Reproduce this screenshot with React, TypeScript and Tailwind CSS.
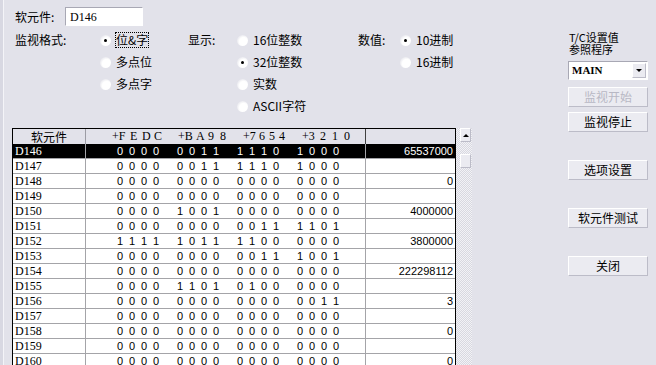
import React from "react";

const cjk = { fontFamily: '"Noto Sans CJK SC", "Noto Sans", sans-serif' };
const serif = { fontFamily: '"Liberation Serif", "Noto Sans CJK SC", serif' };
const sans = { fontFamily: '"Liberation Sans", Arial, sans-serif' };

const rows = [
	{ name: "D146", bits: "0000001111101000", value: "65537000" },
	{ name: "D147", bits: "0000001111101000", value: "" },
	{ name: "D148", bits: "0000000000000000", value: "0" },
	{ name: "D149", bits: "0000000000000000", value: "" },
	{ name: "D150", bits: "0000100100000000", value: "4000000" },
	{ name: "D151", bits: "0000000000111101", value: "" },
	{ name: "D152", bits: "1111101111000000", value: "3800000" },
	{ name: "D153", bits: "0000000000111001", value: "" },
	{ name: "D154", bits: "0000000000000000", value: "222298112" },
	{ name: "D155", bits: "0000110101000000", value: "" },
	{ name: "D156", bits: "0000000000000011", value: "3" },
	{ name: "D157", bits: "0000000000000000", value: "" },
	{ name: "D158", bits: "0000000000000000", value: "0" },
	{ name: "D159", bits: "0000000000000000", value: "" },
	{ name: "D160", bits: "0000000000000000", value: "0" },
];

const Radio = ({ checked, label, focus }: { checked?: boolean; label: string; focus?: boolean }) => (
	<div className="flex h-[22px] items-center">
		<span className="flex h-[11px] w-[11px] items-center justify-center rounded-full bg-[radial-gradient(circle_at_60%_60%,#ffffff_45%,#d6d6e0_100%)]">
			{checked && <span className="h-[3px] w-[3px] rounded-full bg-black" />}
		</span>
		<span
			className={`ml-[5px] text-[12px] leading-[14px] text-black ${focus ? "outline-1 outline-dotted outline-black" : ""}`}
			style={cjk}
		>
			{label}
		</span>
	</div>
);

const Button = ({ label, disabled }: { label: string; disabled?: boolean }) => (
	<div
		className={`flex h-[20px] w-[80px] items-center justify-center border border-t-white border-l-white border-r-[#bcbcc8] border-b-[#bcbcc8] bg-[#ebebf1] text-[12px] ${disabled ? "text-[#b8b8c4]" : "text-black"}`}
		style={cjk}
	>
		{label}
	</div>
);

const Digits = ({ bits }: { bits: string }) => (
	<div className="flex pl-[31px]" style={sans}>
		{[0, 1, 2, 3].map((g) => (
			<div key={g} className="flex w-[60px]">
				{bits
					.slice(g * 4, g * 4 + 4)
					.split("")
					.map((b, i) => (
						<span key={i} className="w-[12px] text-[11px]">
							{b}
						</span>
					))}
			</div>
		))}
	</div>
);

const headGroups = [
	{ ml: 26, pitch: 12, chars: ["+F", "E", "D", "C"] },
	{ ml: 12, pitch: 12, chars: ["+B", "A", "9", "8"] },
	{ ml: 11, pitch: 10, chars: ["+7", "6", "5", "4"] },
	{ ml: 13, pitch: 12, chars: ["+3", "2", "1", "0"] },
];

export default function App() {
	return (
		<div className="flex h-[365px] w-[656px] overflow-hidden bg-[#e2e2ea]">
			<div className="flex w-[4px] shrink-0 border-r border-[#f4f4f8] bg-[#d8d8e2]" />
			<div className="flex w-[564px] shrink-0 flex-col pl-[8px]">
				<div className="flex items-center pt-[7px]">
					<span className="ml-[3px] w-[50px] text-[12px] text-black" style={cjk}>
						软元件:
					</span>
					<div
						className="flex h-[19px] w-[78px] items-center border border-t-[#a8a8b4] border-l-[#a8a8b4] border-r-white border-b-white bg-white pl-[4px] text-[12px] text-black"
						style={serif}
					>
						D146
					</div>
				</div>

				<div className="mt-[3px] flex items-start">
					<div className="ml-[3px] flex w-[173px]">
						<div className="flex h-[22px] w-[85px] items-center text-[12px]" style={cjk}>
							监视格式:
						</div>
						<div className="flex flex-col">
							<Radio checked focus label="位&字" />
							<Radio label="多点位" />
							<Radio label="多点字" />
						</div>
					</div>
					<div className="flex w-[170px]">
						<div className="flex h-[22px] w-[49px] items-center text-[12px]" style={cjk}>
							显示:
						</div>
						<div className="flex flex-col">
							<Radio label="16位整数" />
							<Radio checked label="32位整数" />
							<Radio label="实数" />
							<Radio label="ASCII字符" />
						</div>
					</div>
					<div className="flex">
						<div className="flex h-[22px] w-[42px] items-center text-[12px]" style={cjk}>
							数值:
						</div>
						<div className="flex flex-col">
							<Radio checked label="10进制" />
							<Radio label="16进制" />
						</div>
					</div>
				</div>

				<div className="mt-[11px] flex">
					<div className="w-[444px] shrink-0 border-t border-l border-r border-black bg-white">
						<div className="flex h-[15px] bg-[#e2e2ea] text-[12px] leading-[15px] text-black">
							<div className="w-[73px] border-r border-[#9c9ca4] text-center" style={cjk}>
								软元件
							</div>
							<div className="flex w-[280px] border-r border-[#404040]" style={serif}>
								{headGroups.map((g, gi) => (
									<div key={gi} className="flex" style={{ marginLeft: g.ml }}>
										{g.chars.map((c, i) => (
											<span key={i} style={{ width: i === 0 ? g.pitch + 6 : g.pitch }}>
												{c}
											</span>
										))}
									</div>
								))}
							</div>
							<div className="flex-1" />
						</div>
						{rows.map((r, idx) => {
							const sel = idx === 0;
							return (
								<div
									key={r.name}
									className={`flex h-[15px] border-b border-[#a4a4a8] leading-[14px] ${sel ? "bg-black text-white" : "text-black"}`}
								>
									<div className="w-[73px] border-r border-[#a4a4a8] pl-[2px] text-[12px]" style={serif}>
										{r.name}
									</div>
									<div className="w-[280px] border-r border-[#a4a4a8]">
										<Digits bits={r.bits} />
									</div>
									<div className="flex-1 pr-[2px] text-right text-[11px]" style={sans}>
										{r.value}
									</div>
								</div>
							);
						})}
					</div>
					<div className="flex h-[240px] w-[16px] shrink-0 flex-col bg-[repeating-conic-gradient(#d8d8e0_0_25%,#f2f2f6_0_50%)] bg-[length:2px_2px] pl-[4px]">
						<div className="flex h-[14px] w-[11px] items-center justify-center border border-t-white border-l-white border-r-[#bcbcc8] border-b-[#bcbcc8] bg-[#ebebf1]">
							<span className="h-0 w-0 border-x-[3px] border-b-[3px] border-x-transparent border-b-black" />
						</div>
						<div className="mt-[12px] h-[14px] w-[11px] border border-t-white border-l-white border-r-[#bcbcc8] border-b-[#bcbcc8] bg-[#ebebf1]" />
					</div>
				</div>
			</div>

			<div className="flex w-[80px] shrink-0 flex-col pt-[31px]">
				<div className="pl-[1px] text-[11px] leading-[12px] text-black" style={cjk}>
					<div>T/C设置值</div>
					<div>参照程序</div>
				</div>
				<div className="mt-[6px] flex h-[19px] w-[80px] items-center justify-between border border-t-[#a8a8b4] border-l-[#a8a8b4] border-r-white border-b-white bg-white pl-[3px] pr-[1px]">
					<span className="text-[11px] font-bold text-black" style={serif}>
						MAIN
					</span>
					<span className="flex h-[15px] w-[14px] items-center justify-center border border-t-white border-l-white border-r-[#bcbcc8] border-b-[#bcbcc8] bg-[#ebebf1]">
						<span className="h-0 w-0 border-x-[3px] border-t-[3px] border-x-transparent border-t-black" />
					</span>
				</div>
				<div className="mt-[7px]">
					<Button disabled label="监视开始" />
				</div>
				<div className="mt-[5px]">
					<Button label="监视停止" />
				</div>
				<div className="mt-[28px]">
					<Button label="选项设置" />
				</div>
				<div className="mt-[28px]">
					<Button label="软元件测试" />
				</div>
				<div className="mt-[28px]">
					<Button label="关闭" />
				</div>
			</div>
		</div>
	);
}
